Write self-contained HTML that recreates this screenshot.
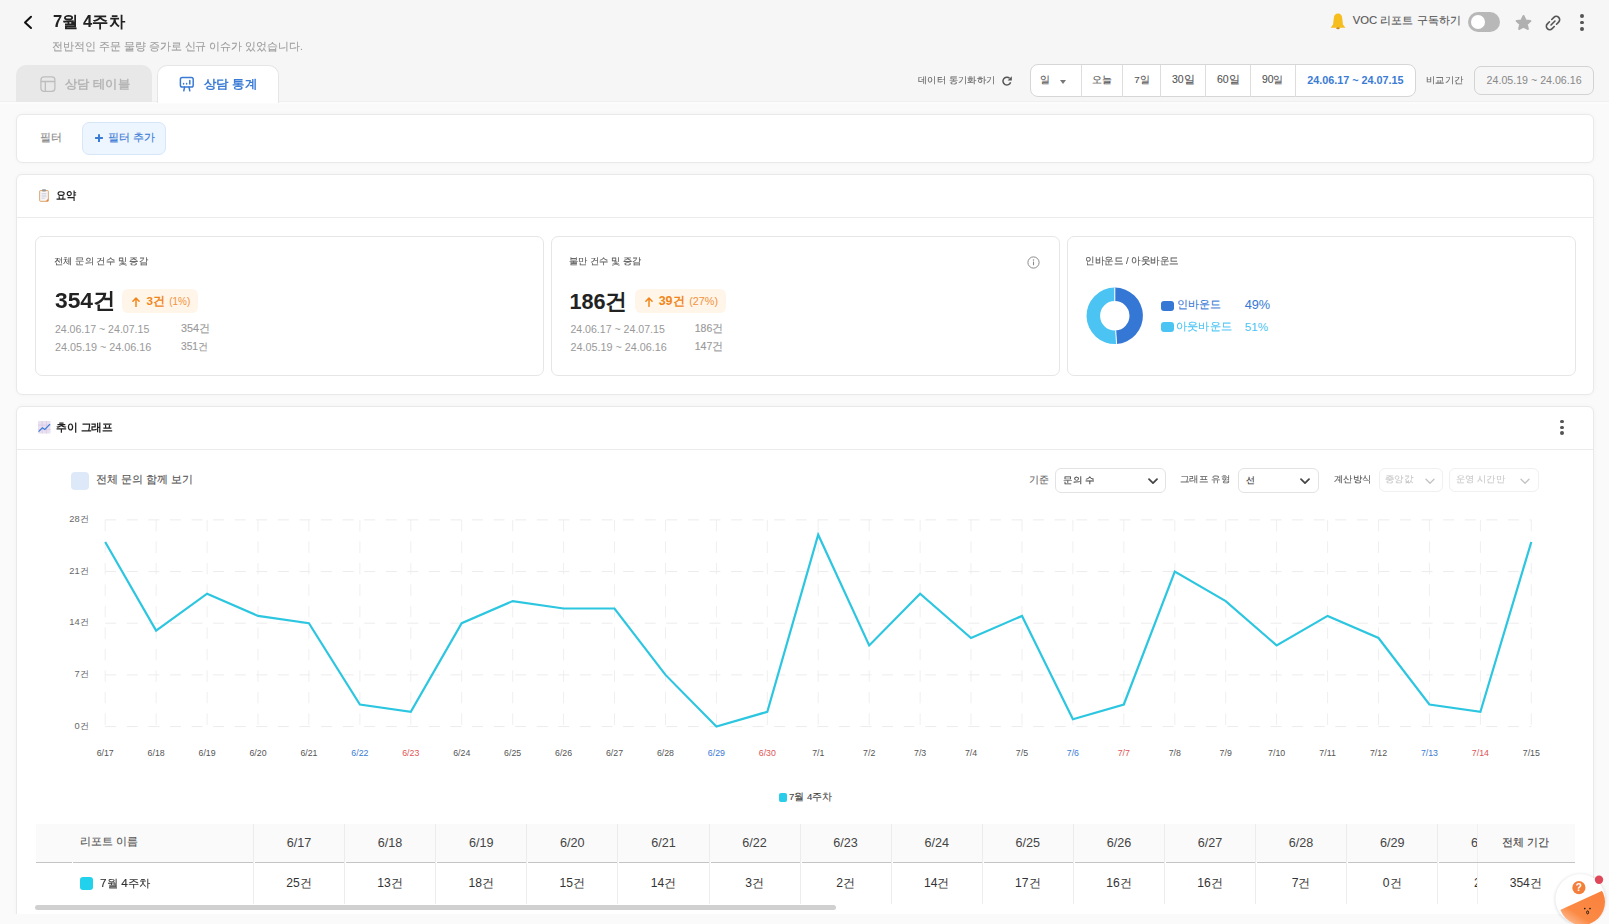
<!DOCTYPE html><html><head><meta charset="utf-8"><style>
*{box-sizing:border-box;margin:0;padding:0}
html,body{width:1609px;height:924px;overflow:hidden}
body{background:#fafafa;font-family:"Liberation Sans",sans-serif;color:#222;position:relative}
.a{position:absolute;white-space:nowrap}
.card{position:absolute;background:#fff;border:1px solid #e9e9e9;border-radius:6px;box-shadow:0 0 5px rgba(0,0,0,0.03)}
.sc{position:absolute;background:#fff;border:1px solid #e6e6e6;border-radius:7px;top:236px;width:509px;height:140px}
.sel{position:absolute;top:468px;height:25px;border:1px solid #e3e3e3;border-radius:6px;background:#fff}
.sel.dis{border-color:#f0f0f0}
</style></head><body>
<div class="a" style="left:0;top:0;width:1609px;height:101px;background:#f6f6f6"></div>
<div class="a" style="left:0;top:101px;width:1609px;height:1px;background:#f0f0f0"></div>
<div class="a" style="left:0;top:102px;width:1609px;height:2px;background:#fcfcfc"></div>
<svg class="a" style="left:0;top:0" width="60" height="40"><path d="M31 16.8 L25 22.4 L31 28" fill="none" stroke="#111" stroke-width="2" stroke-linecap="round" stroke-linejoin="round"/></svg>
<div class="a" style="left:52.8px;top:13.25px;font-size:16.32px;line-height:16.32px;font-weight:700;color:#222;transform:scaleX(1.0169);transform-origin:0 0;">7월 4주차</div>
<div class="a" style="left:52.1px;top:40.6px;font-size:10.79px;line-height:10.79px;font-weight:400;color:#9e9e9e;transform:scaleX(0.9964);transform-origin:0 0;-webkit-text-stroke:0.12px #9e9e9e;">전반적인 주문 물량 증가로 신규 이슈가 있었습니다.</div>
<svg class="a" style="left:1330px;top:13px" width="16" height="17" viewBox="0 0 16 17"><path d="M8 0.6c-2.6 0-3.9 1.9-4.2 4.3L3.1 11.4 0.6 14.8H15.4L12.9 11.4 12.2 4.9C11.9 2.5 10.6 0.6 8 0.6z" fill="#f6bd1e"/><ellipse cx="8" cy="15.2" rx="1.8" ry="1" fill="#c9881a"/></svg>
<div class="a" style="left:1352.8px;top:15.4px;font-size:11.29px;line-height:11.29px;font-weight:400;color:#555;-webkit-text-stroke:0.12px #555;">VOC 리포트 구독하기</div>
<div class="a" style="left:1468px;top:12px;width:32px;height:20px;border-radius:10px;background:#b8b8b8"></div>
<div class="a" style="left:1470.9px;top:14.8px;width:14.3px;height:14.3px;border-radius:50%;background:#fff"></div>
<svg class="a" style="left:1514px;top:13px" width="19" height="19" viewBox="0 0 19 19"><g transform="translate(9.5 9.9) scale(0.86) translate(-9.5 -9.5)"><path d="M9.5 1.6l2.3 5.1 5.5.6-4.1 3.7 1.2 5.4-4.9-2.8-4.9 2.8 1.2-5.4-4.1-3.7 5.5-.6z" fill="#b0b0b0" stroke="#b0b0b0" stroke-width="2.6" stroke-linejoin="round"/></g></svg>
<svg class="a" style="left:1540.7px;top:10.75px" width="24" height="24" viewBox="0 0 24 24"><g transform="rotate(-45 12 12)" fill="none" stroke="#555" stroke-width="1.6" stroke-linecap="round"><path d="M10.4 8.6H7.4a3.4 3.4 0 0 0 0 6.8H10.4M13.6 8.6H16.6a3.4 3.4 0 0 1 0 6.8H13.6M9.2 12H14.8"/></g></svg>
<div class="a" style="left:1579.9px;top:14.4px;width:3.8px;height:3.8px;border-radius:50%;background:#555"></div>
<div class="a" style="left:1579.9px;top:20.5px;width:3.8px;height:3.8px;border-radius:50%;background:#555"></div>
<div class="a" style="left:1579.9px;top:26.900000000000002px;width:3.8px;height:3.8px;border-radius:50%;background:#555"></div>
<div class="a" style="left:16px;top:65px;width:136px;height:37px;background:#e8e8e8;border-radius:10px 10px 0 0"></div>
<svg class="a" style="left:40px;top:76px" width="16" height="16" viewBox="0 0 16 16"><rect x="0.9" y="0.9" width="14" height="14.4" rx="3" fill="none" stroke="#bdbdbd" stroke-width="1.3"/><path d="M0.9 5.5H14.9M5.3 5.5V15.3" stroke="#bdbdbd" stroke-width="1.3"/></svg>
<div class="a" style="left:64.5px;top:78.5px;font-size:11.96px;line-height:11.96px;font-weight:700;color:#b5b5b5;transform:scaleX(1.027);transform-origin:0 0;">상담 테이블</div>
<div class="a" style="left:156.5px;top:65px;width:122px;height:38px;background:#fff;border:1px solid #e6e6e6;border-bottom:none;border-radius:10px 10px 0 0"></div>
<svg class="a" style="left:179px;top:76px" width="16" height="16" viewBox="0 0 16 16"><rect x="1.4" y="1.6" width="12.8" height="9.4" rx="1.8" fill="none" stroke="#3a7bd5" stroke-width="1.5"/><path d="M4.6 7.4v0.6M7.6 7.4v0.6M10.8 4.6v3.4M5.6 11l-0.8 3.8M10 11l0.8 3.8" stroke="#3a7bd5" stroke-width="1.5" stroke-linecap="round"/></svg>
<div class="a" style="left:204.2px;top:77.5px;font-size:11.99px;line-height:11.99px;font-weight:700;color:#3a7bd5;transform:scaleX(1.036);transform-origin:0 0;">상담 통계</div>
<div class="a" style="left:917.5px;top:75.65px;font-size:9.13px;line-height:9.13px;font-weight:400;color:#666;transform:scaleX(1.0378);transform-origin:0 0;-webkit-text-stroke:0.12px #666;">데이터 동기화하기</div>
<svg class="a" style="left:1001px;top:75px" width="12" height="12" viewBox="0 0 12 12"><path d="M9.6 7.2A3.9 3.9 0 1 1 8.6 3.3" fill="none" stroke="#555" stroke-width="1.5"/><path d="M10.8 1.2v4.2H6.6z" fill="#555"/></svg>
<div class="a" style="left:1029.5px;top:64.4px;width:386px;height:33px;border:1px solid #d6d6d6;border-radius:8px;background:#fff"></div>
<div class="a" style="left:1080.9px;top:65px;width:1px;height:32px;background:#dddddd"></div>
<div class="a" style="left:1121.8px;top:65px;width:1px;height:32px;background:#dddddd"></div>
<div class="a" style="left:1159.9px;top:65px;width:1px;height:32px;background:#dddddd"></div>
<div class="a" style="left:1205.0px;top:65px;width:1px;height:32px;background:#dddddd"></div>
<div class="a" style="left:1250.1px;top:65px;width:1px;height:32px;background:#dddddd"></div>
<div class="a" style="left:1294.8px;top:65px;width:1px;height:32px;background:#dddddd"></div>
<div class="a" style="left:1040.2px;top:75.1px;font-size:10.06px;line-height:10.06px;font-weight:400;color:#555;-webkit-text-stroke:0.12px #555;">일</div>
<div class="a" style="left:1092.1px;top:74.8px;font-size:9.51px;line-height:9.51px;font-weight:400;color:#555;-webkit-text-stroke:0.12px #555;">오늘</div>
<div class="a" style="left:1134.25px;top:75.3px;font-size:9.84px;line-height:9.84px;font-weight:400;color:#555;-webkit-text-stroke:0.12px #555;">7일</div>
<div class="a" style="left:1172.0px;top:74.3px;font-size:10.51px;line-height:10.51px;font-weight:400;color:#555;-webkit-text-stroke:0.12px #555;">30일</div>
<div class="a" style="left:1217.0px;top:74.3px;font-size:10.55px;line-height:10.55px;font-weight:400;color:#555;-webkit-text-stroke:0.12px #555;">60일</div>
<div class="a" style="left:1261.9px;top:75.3px;font-size:10.4px;line-height:10.4px;font-weight:400;color:#555;-webkit-text-stroke:0.12px #555;">90일</div>
<svg class="a" style="left:1060px;top:79.7px" width="6" height="4" viewBox="0 0 6 4"><path d="M0 0h6L3 4z" fill="#777"/></svg>
<div class="a" style="left:1307.2px;top:75.1px;font-size:10.81px;line-height:10.81px;font-weight:700;color:#3a7bd5;">24.06.17 ~ 24.07.15</div>
<div class="a" style="left:1425.76px;top:76.0px;font-size:9.03px;line-height:9.03px;font-weight:400;color:#666;transform:scaleX(1.04);transform-origin:0 0;-webkit-text-stroke:0.12px #666;">비교기간</div>
<div class="a" style="left:1474.4px;top:66px;width:119.2px;height:29.4px;border:1px solid #d3d3d3;border-radius:7px"></div>
<div class="a" style="left:1486.6px;top:74.85px;font-size:10.65px;line-height:10.65px;font-weight:400;color:#888;">24.05.19 ~ 24.06.16</div>
<div class="card" style="left:16px;top:114px;width:1578px;height:49px"></div>
<div class="a" style="left:39.9px;top:131.6px;font-size:10.84px;line-height:10.84px;font-weight:400;color:#888;-webkit-text-stroke:0.12px #888;">필터</div>
<div class="a" style="left:82.3px;top:122px;width:84.1px;height:32.6px;background:#edf5fe;border:1px solid #d8e7f8;border-radius:7px"></div>
<svg class="a" style="left:94px;top:133px" width="10" height="10" viewBox="0 0 10 10"><path d="M5 1.2v7.7M1.1 5h7.8" stroke="#3a7bd5" stroke-width="2"/></svg>
<div class="a" style="left:108.1px;top:132.05px;font-size:10.89px;line-height:10.89px;font-weight:500;color:#3a7bd5;-webkit-text-stroke:0.12px #3a7bd5;">필터 추가</div>
<div class="card" style="left:16px;top:174px;width:1578px;height:221px"></div>
<div class="a" style="left:17px;top:217px;width:1576px;height:1px;background:#ebebeb"></div>
<svg class="a" style="left:39px;top:189px" width="10" height="13" viewBox="0 0 10 13"><rect x="0.7" y="1.6" width="8.6" height="10.7" rx="0.6" fill="#fdf6ee" stroke="#d39a5c" stroke-width="0.9"/><rect x="1.7" y="2.8" width="6.6" height="8.4" fill="#f4f4fa"/><path d="M2.6 4.6h4.8M2.6 6.2h4.8M2.6 7.8h4.8M2.6 9.4h3" stroke="#c9c9d6" stroke-width="0.7"/><path d="M6.8 12.3L9.3 9.6V12.3z" fill="#e8873a"/><rect x="3" y="0.3" width="4" height="2.2" rx="0.8" fill="#9a9a9a"/></svg>
<div class="a" style="left:55.7px;top:190.1px;font-size:10.98px;line-height:10.98px;font-weight:700;color:#222;transform:scaleX(0.9261);transform-origin:0 0;">요약</div>
<div class="sc" style="left:35px"></div>
<div class="sc" style="left:551px"></div>
<div class="sc" style="left:1067px"></div>
<div class="a" style="left:122.3px;top:288.6px;width:76px;height:24.6px;background:#fff5e9;border-radius:6px"></div>
<div class="a" style="left:635.3px;top:288.6px;width:91px;height:24.6px;background:#fff5e9;border-radius:6px"></div>
<svg class="a" style="left:132.4px;top:296.5px" width="8" height="10" viewBox="0 0 8 10"><path d="M4 9.4V1.2M0.9 4.2L4 1.1 7.1 4.2" fill="none" stroke="#f0861a" stroke-width="1.5" stroke-linecap="round" stroke-linejoin="round"/></svg>
<svg class="a" style="left:645.4px;top:296.5px" width="8" height="10" viewBox="0 0 8 10"><path d="M4 9.4V1.2M0.9 4.2L4 1.1 7.1 4.2" fill="none" stroke="#f0861a" stroke-width="1.5" stroke-linecap="round" stroke-linejoin="round"/></svg>
<div class="a" style="left:53.87px;top:257.05px;font-size:8.97px;line-height:8.97px;font-weight:400;color:#555;transform:scaleX(1.0344);transform-origin:0 0;-webkit-text-stroke:0.12px #555;">전체 문의 건수 및 증감</div>
<div class="a" style="left:55.2px;top:290.2px;font-size:22.33px;line-height:22.33px;font-weight:700;color:#222;transform:scaleX(1.0211);transform-origin:0 0;">354건</div>
<div class="a" style="left:146.5px;top:295.0px;font-size:11.68px;line-height:11.68px;font-weight:700;color:#f0861a;">3건</div>
<div class="a" style="left:54.9px;top:324.25px;font-size:10.58px;line-height:10.58px;font-weight:400;color:#999;">24.06.17 ~ 24.07.15</div>
<div class="a" style="left:181.0px;top:323.25px;font-size:10.76px;line-height:10.76px;font-weight:400;color:#999;-webkit-text-stroke:0.12px #999;">354건</div>
<div class="a" style="left:54.9px;top:342.25px;font-size:10.81px;line-height:10.81px;font-weight:400;color:#999;">24.05.19 ~ 24.06.16</div>
<div class="a" style="left:181.0px;top:342.25px;font-size:10.21px;line-height:10.21px;font-weight:400;color:#999;-webkit-text-stroke:0.12px #999;">351건</div>
<div class="a" style="left:569.37px;top:257.05px;font-size:9.0px;line-height:9.0px;font-weight:400;color:#555;transform:scaleX(1.03);transform-origin:0 0;-webkit-text-stroke:0.12px #555;">불만 건수 및 증감</div>
<div class="a" style="left:569.4px;top:290.5px;font-size:21.64px;line-height:21.64px;font-weight:700;color:#222;">186건</div>
<div class="a" style="left:658.7px;top:295.0px;font-size:12.46px;line-height:12.46px;font-weight:700;color:#f0861a;">39건</div>
<div class="a" style="left:570.4px;top:324.25px;font-size:10.58px;line-height:10.58px;font-weight:400;color:#999;">24.06.17 ~ 24.07.15</div>
<div class="a" style="left:694.7px;top:323.25px;font-size:10.52px;line-height:10.52px;font-weight:400;color:#999;-webkit-text-stroke:0.12px #999;">186건</div>
<div class="a" style="left:570.4px;top:342.25px;font-size:10.81px;line-height:10.81px;font-weight:400;color:#999;">24.05.19 ~ 24.06.16</div>
<div class="a" style="left:694.7px;top:341.25px;font-size:10.52px;line-height:10.52px;font-weight:400;color:#999;-webkit-text-stroke:0.12px #999;">147건</div>
<div class="a" style="left:1085.14px;top:256.32px;font-size:9.68px;line-height:9.68px;font-weight:400;color:#555;transform:scaleX(0.9583);transform-origin:0 0;-webkit-text-stroke:0.12px #555;">인바운드 / 아웃바운드</div>
<div class="a" style="left:1177.1px;top:298.7px;font-size:11.35px;line-height:11.35px;font-weight:400;color:#3577d4;-webkit-text-stroke:0.12px #3577d4;">인바운드</div>
<div class="a" style="left:1244.7px;top:299.45px;font-size:12.75px;line-height:12.75px;font-weight:400;color:#3577d4;">49%</div>
<div class="a" style="left:1176.48px;top:320.6px;font-size:11.49px;line-height:11.49px;font-weight:400;color:#4bc4f4;transform:scaleX(1.0226);transform-origin:0 0;-webkit-text-stroke:0.12px #4bc4f4;">아웃바운드</div>
<div class="a" style="left:1244.7px;top:320.6px;font-size:11.71px;line-height:11.71px;font-weight:400;color:#4bc4f4;">51%</div>
<div class="a" style="left:169.2px;top:296.5px;font-size:9.99px;line-height:9.99px;font-weight:400;color:#f2923a;">(1%)</div>
<div class="a" style="left:689.2px;top:295.5px;font-size:10.8px;line-height:10.8px;font-weight:400;color:#f2923a;">(27%)</div>
<svg class="a" style="left:1026.5px;top:255.5px" width="13" height="13" viewBox="0 0 13 13"><circle cx="6.5" cy="6.5" r="5.6" fill="none" stroke="#8a8a8a" stroke-width="1"/><path d="M6.5 5.6v3.6" stroke="#8a8a8a" stroke-width="1.1"/><circle cx="6.5" cy="3.9" r="0.75" fill="#8a8a8a"/></svg>
<svg class="a" style="left:0;top:0" width="1609" height="400"><path d="M1114.80 287.60A28.2 28.2 0 0 1 1116.57 343.94L1115.72 330.47A14.7 14.7 0 0 0 1114.80 301.10Z" fill="#3577d4"/><path d="M1116.57 343.94A28.2 28.2 0 1 1 1114.80 287.60L1114.80 301.10A14.7 14.7 0 1 0 1115.72 330.47Z" fill="#4bc4f4"/><path d="M1114.80 287.60L1114.80 301.10" stroke="#fff" stroke-width="1"/><path d="M1116.57 343.94L1115.72 330.47" stroke="#fff" stroke-width="1"/></svg>
<div class="a" style="left:1161.2px;top:300.5px;width:12.4px;height:10px;border-radius:3px;background:#3577d4"></div>
<div class="a" style="left:1161.2px;top:321.8px;width:12.4px;height:10px;border-radius:3px;background:#4bc4f4"></div>
<div class="a" style="left:16px;top:406px;width:1578px;height:540px;background:#fff;border:1px solid #e9e9e9;border-radius:6px;box-shadow:0 0 5px rgba(0,0,0,0.03)"></div>
<div class="a" style="left:17px;top:449px;width:1576px;height:1px;background:#ebebeb"></div>
<svg class="a" style="left:37.5px;top:421px" width="13" height="13" viewBox="0 0 13 13"><rect x="0" y="0" width="12.5" height="12.5" rx="1" fill="#e9e0f0"/><path d="M0 4.2h12.5M0 8.4h12.5M4.2 0v12.5M8.4 0v12.5" stroke="#d3c2e2" stroke-width="0.6"/><path d="M0.6 10.6L4.4 6.8 6.8 8.4 12 3.2" fill="none" stroke="#3a7bd5" stroke-width="1.2"/></svg>
<div class="a" style="left:55.7px;top:421.75px;font-size:11.45px;line-height:11.45px;font-weight:700;color:#222;transform:scaleX(0.9793);transform-origin:0 0;">추이 그래프</div>
<div class="a" style="left:1560.3px;top:419.70000000000005px;width:3.8px;height:3.8px;border-radius:50%;background:#555"></div>
<div class="a" style="left:1560.3px;top:425.5px;width:3.8px;height:3.8px;border-radius:50%;background:#555"></div>
<div class="a" style="left:1560.3px;top:431.3px;width:3.8px;height:3.8px;border-radius:50%;background:#555"></div>
<div class="a" style="left:71.4px;top:472px;width:17.6px;height:17.8px;border-radius:4px;background:#dde9f8"></div>
<div class="a" style="left:95.8px;top:474.45px;font-size:11.11px;line-height:11.11px;font-weight:400;color:#555;-webkit-text-stroke:0.12px #555;">전체 문의 함께 보기</div>
<div class="sel" style="left:1055.1px;width:111.3px;height:24.4px;top:468.2px"></div>
<div class="sel" style="left:1238.3px;width:80.4px;height:24.4px;top:468.2px"></div>
<div class="sel dis" style="left:1378.7px;width:64.3px;height:24.2px;top:468.2px"></div>
<div class="sel dis" style="left:1449.3px;width:89.5px;height:24.2px;top:468.2px"></div>
<div class="a" style="left:1029.0px;top:475.25px;font-size:10.06px;line-height:10.06px;font-weight:400;color:#666;-webkit-text-stroke:0.12px #666;">기준</div>
<div class="a" style="left:1062.73px;top:475.25px;font-size:9.46px;line-height:9.46px;font-weight:400;color:#333;transform:scaleX(1.0679);transform-origin:0 0;-webkit-text-stroke:0.12px #333;">문의 수</div>
<div class="a" style="left:1180.45px;top:474.45px;font-size:9.45px;line-height:9.45px;font-weight:400;color:#666;transform:scaleX(1.0543);transform-origin:0 0;-webkit-text-stroke:0.12px #666;">그래프 유형</div>
<div class="a" style="left:1246.2px;top:475.95px;font-size:9.05px;line-height:9.05px;font-weight:400;color:#333;-webkit-text-stroke:0.12px #333;">선</div>
<div class="a" style="left:1333.6px;top:475.45px;font-size:9.25px;line-height:9.25px;font-weight:400;color:#555;transform:scaleX(1.04);transform-origin:0 0;-webkit-text-stroke:0.12px #555;">계산방식</div>
<div class="a" style="left:1384.75px;top:475.45px;font-size:9.27px;line-height:9.27px;font-weight:400;color:#c8c8c8;transform:scaleX(1.05);transform-origin:0 0;-webkit-text-stroke:0.12px #c8c8c8;">중앙값</div>
<div class="a" style="left:1456.37px;top:475.45px;font-size:9.01px;line-height:9.01px;font-weight:400;color:#c8c8c8;transform:scaleX(1.0319);transform-origin:0 0;-webkit-text-stroke:0.12px #c8c8c8;">운영 시간만</div>
<svg class="a" style="left:1148px;top:477.5px" width="10" height="7" viewBox="0 0 10 7"><path d="M1 1.2l4 4 4-4" fill="none" stroke="#444" stroke-width="1.7" stroke-linecap="round" stroke-linejoin="round"/></svg>
<svg class="a" style="left:1299.6px;top:477.5px" width="10" height="7" viewBox="0 0 10 7"><path d="M1 1.2l4 4 4-4" fill="none" stroke="#444" stroke-width="1.7" stroke-linecap="round" stroke-linejoin="round"/></svg>
<svg class="a" style="left:1425px;top:477.5px" width="10" height="7" viewBox="0 0 10 7"><path d="M1 1.2l4 4 4-4" fill="none" stroke="#c4c4c4" stroke-width="1.4" stroke-linecap="round" stroke-linejoin="round"/></svg>
<svg class="a" style="left:1520px;top:477.5px" width="10" height="7" viewBox="0 0 10 7"><path d="M1 1.2l4 4 4-4" fill="none" stroke="#c4c4c4" stroke-width="1.4" stroke-linecap="round" stroke-linejoin="round"/></svg>
<svg class="a" style="left:0;top:0" width="1609" height="924"><line x1="105.2" y1="519.9" x2="1531.3" y2="519.9" stroke="#ececec" stroke-width="1" stroke-dasharray="11 10.58"/><line x1="105.2" y1="571.6" x2="1531.3" y2="571.6" stroke="#ececec" stroke-width="1" stroke-dasharray="11 10.58"/><line x1="105.2" y1="623.2" x2="1531.3" y2="623.2" stroke="#ececec" stroke-width="1" stroke-dasharray="11 10.58"/><line x1="105.2" y1="674.9" x2="1531.3" y2="674.9" stroke="#ececec" stroke-width="1" stroke-dasharray="11 10.58"/><line x1="105.2" y1="726.6" x2="1531.3" y2="726.6" stroke="#ececec" stroke-width="1" stroke-dasharray="11 10.58"/><line x1="105.2" y1="519.9" x2="105.2" y2="726.6" stroke="#efefef" stroke-width="1" stroke-dasharray="11.5 10"/><line x1="156.1" y1="519.9" x2="156.1" y2="726.6" stroke="#efefef" stroke-width="1" stroke-dasharray="11.5 10"/><line x1="207.1" y1="519.9" x2="207.1" y2="726.6" stroke="#efefef" stroke-width="1" stroke-dasharray="11.5 10"/><line x1="258.0" y1="519.9" x2="258.0" y2="726.6" stroke="#efefef" stroke-width="1" stroke-dasharray="11.5 10"/><line x1="308.9" y1="519.9" x2="308.9" y2="726.6" stroke="#efefef" stroke-width="1" stroke-dasharray="11.5 10"/><line x1="359.9" y1="519.9" x2="359.9" y2="726.6" stroke="#efefef" stroke-width="1" stroke-dasharray="11.5 10"/><line x1="410.8" y1="519.9" x2="410.8" y2="726.6" stroke="#efefef" stroke-width="1" stroke-dasharray="11.5 10"/><line x1="461.7" y1="519.9" x2="461.7" y2="726.6" stroke="#efefef" stroke-width="1" stroke-dasharray="11.5 10"/><line x1="512.7" y1="519.9" x2="512.7" y2="726.6" stroke="#efefef" stroke-width="1" stroke-dasharray="11.5 10"/><line x1="563.6" y1="519.9" x2="563.6" y2="726.6" stroke="#efefef" stroke-width="1" stroke-dasharray="11.5 10"/><line x1="614.5" y1="519.9" x2="614.5" y2="726.6" stroke="#efefef" stroke-width="1" stroke-dasharray="11.5 10"/><line x1="665.5" y1="519.9" x2="665.5" y2="726.6" stroke="#efefef" stroke-width="1" stroke-dasharray="11.5 10"/><line x1="716.4" y1="519.9" x2="716.4" y2="726.6" stroke="#efefef" stroke-width="1" stroke-dasharray="11.5 10"/><line x1="767.3" y1="519.9" x2="767.3" y2="726.6" stroke="#efefef" stroke-width="1" stroke-dasharray="11.5 10"/><line x1="818.2" y1="519.9" x2="818.2" y2="726.6" stroke="#efefef" stroke-width="1" stroke-dasharray="11.5 10"/><line x1="869.2" y1="519.9" x2="869.2" y2="726.6" stroke="#efefef" stroke-width="1" stroke-dasharray="11.5 10"/><line x1="920.1" y1="519.9" x2="920.1" y2="726.6" stroke="#efefef" stroke-width="1" stroke-dasharray="11.5 10"/><line x1="971.0" y1="519.9" x2="971.0" y2="726.6" stroke="#efefef" stroke-width="1" stroke-dasharray="11.5 10"/><line x1="1022.0" y1="519.9" x2="1022.0" y2="726.6" stroke="#efefef" stroke-width="1" stroke-dasharray="11.5 10"/><line x1="1072.9" y1="519.9" x2="1072.9" y2="726.6" stroke="#efefef" stroke-width="1" stroke-dasharray="11.5 10"/><line x1="1123.8" y1="519.9" x2="1123.8" y2="726.6" stroke="#efefef" stroke-width="1" stroke-dasharray="11.5 10"/><line x1="1174.8" y1="519.9" x2="1174.8" y2="726.6" stroke="#efefef" stroke-width="1" stroke-dasharray="11.5 10"/><line x1="1225.7" y1="519.9" x2="1225.7" y2="726.6" stroke="#efefef" stroke-width="1" stroke-dasharray="11.5 10"/><line x1="1276.6" y1="519.9" x2="1276.6" y2="726.6" stroke="#efefef" stroke-width="1" stroke-dasharray="11.5 10"/><line x1="1327.6" y1="519.9" x2="1327.6" y2="726.6" stroke="#efefef" stroke-width="1" stroke-dasharray="11.5 10"/><line x1="1378.5" y1="519.9" x2="1378.5" y2="726.6" stroke="#efefef" stroke-width="1" stroke-dasharray="11.5 10"/><line x1="1429.4" y1="519.9" x2="1429.4" y2="726.6" stroke="#efefef" stroke-width="1" stroke-dasharray="11.5 10"/><line x1="1480.4" y1="519.9" x2="1480.4" y2="726.6" stroke="#efefef" stroke-width="1" stroke-dasharray="11.5 10"/><line x1="1531.3" y1="519.9" x2="1531.3" y2="726.6" stroke="#efefef" stroke-width="1" stroke-dasharray="11.5 10"/><polyline points="105.2,542.0 156.1,630.6 207.1,593.7 258.0,615.9 308.9,623.2 359.9,704.5 410.8,711.8 461.7,623.2 512.7,601.1 563.6,608.5 614.5,608.5 665.5,674.9 716.4,726.6 767.3,711.8 818.2,534.7 869.2,645.4 920.1,593.7 971.0,638.0 1022.0,615.9 1072.9,719.2 1123.8,704.5 1174.8,571.6 1225.7,601.1 1276.6,645.4 1327.6,615.9 1378.5,638.0 1429.4,704.5 1480.4,711.8 1531.3,542.0" fill="none" stroke="#2cc6e0" stroke-width="2.2" stroke-linejoin="miter"/></svg>
<div class="a" style="left:20px;width:68.6px;text-align:right;top:515.05px;font-size:9.3px;line-height:9.3px;color:#666">28건</div>
<div class="a" style="left:20px;width:68.6px;text-align:right;top:566.73px;font-size:9.3px;line-height:9.3px;color:#666">21건</div>
<div class="a" style="left:20px;width:68.6px;text-align:right;top:618.40px;font-size:9.3px;line-height:9.3px;color:#666">14건</div>
<div class="a" style="left:20px;width:68.6px;text-align:right;top:670.07px;font-size:9.3px;line-height:9.3px;color:#666">7건</div>
<div class="a" style="left:20px;width:68.6px;text-align:right;top:721.75px;font-size:9.3px;line-height:9.3px;color:#666">0건</div>
<div class="a" style="left:65.20px;width:80px;text-align:center;top:749.15px;font-size:8.79px;line-height:8.79px;color:#555">6/17</div>
<div class="a" style="left:116.13px;width:80px;text-align:center;top:749.15px;font-size:8.79px;line-height:8.79px;color:#555">6/18</div>
<div class="a" style="left:167.06px;width:80px;text-align:center;top:749.15px;font-size:8.79px;line-height:8.79px;color:#555">6/19</div>
<div class="a" style="left:218.00px;width:80px;text-align:center;top:749.15px;font-size:8.79px;line-height:8.79px;color:#555">6/20</div>
<div class="a" style="left:268.93px;width:80px;text-align:center;top:749.15px;font-size:8.79px;line-height:8.79px;color:#555">6/21</div>
<div class="a" style="left:319.86px;width:80px;text-align:center;top:749.15px;font-size:8.79px;line-height:8.79px;color:#3a7bd5">6/22</div>
<div class="a" style="left:370.79px;width:80px;text-align:center;top:749.15px;font-size:8.79px;line-height:8.79px;color:#e05555">6/23</div>
<div class="a" style="left:421.72px;width:80px;text-align:center;top:749.15px;font-size:8.79px;line-height:8.79px;color:#555">6/24</div>
<div class="a" style="left:472.66px;width:80px;text-align:center;top:749.15px;font-size:8.79px;line-height:8.79px;color:#555">6/25</div>
<div class="a" style="left:523.59px;width:80px;text-align:center;top:749.15px;font-size:8.79px;line-height:8.79px;color:#555">6/26</div>
<div class="a" style="left:574.52px;width:80px;text-align:center;top:749.15px;font-size:8.79px;line-height:8.79px;color:#555">6/27</div>
<div class="a" style="left:625.45px;width:80px;text-align:center;top:749.15px;font-size:8.79px;line-height:8.79px;color:#555">6/28</div>
<div class="a" style="left:676.39px;width:80px;text-align:center;top:749.15px;font-size:8.79px;line-height:8.79px;color:#3a7bd5">6/29</div>
<div class="a" style="left:727.32px;width:80px;text-align:center;top:749.15px;font-size:8.79px;line-height:8.79px;color:#e05555">6/30</div>
<div class="a" style="left:778.25px;width:80px;text-align:center;top:749.15px;font-size:8.79px;line-height:8.79px;color:#555">7/1</div>
<div class="a" style="left:829.18px;width:80px;text-align:center;top:749.15px;font-size:8.79px;line-height:8.79px;color:#555">7/2</div>
<div class="a" style="left:880.11px;width:80px;text-align:center;top:749.15px;font-size:8.79px;line-height:8.79px;color:#555">7/3</div>
<div class="a" style="left:931.05px;width:80px;text-align:center;top:749.15px;font-size:8.79px;line-height:8.79px;color:#555">7/4</div>
<div class="a" style="left:981.98px;width:80px;text-align:center;top:749.15px;font-size:8.79px;line-height:8.79px;color:#555">7/5</div>
<div class="a" style="left:1032.91px;width:80px;text-align:center;top:749.15px;font-size:8.79px;line-height:8.79px;color:#3a7bd5">7/6</div>
<div class="a" style="left:1083.84px;width:80px;text-align:center;top:749.15px;font-size:8.79px;line-height:8.79px;color:#e05555">7/7</div>
<div class="a" style="left:1134.78px;width:80px;text-align:center;top:749.15px;font-size:8.79px;line-height:8.79px;color:#555">7/8</div>
<div class="a" style="left:1185.71px;width:80px;text-align:center;top:749.15px;font-size:8.79px;line-height:8.79px;color:#555">7/9</div>
<div class="a" style="left:1236.64px;width:80px;text-align:center;top:749.15px;font-size:8.79px;line-height:8.79px;color:#555">7/10</div>
<div class="a" style="left:1287.57px;width:80px;text-align:center;top:749.15px;font-size:8.79px;line-height:8.79px;color:#555">7/11</div>
<div class="a" style="left:1338.50px;width:80px;text-align:center;top:749.15px;font-size:8.79px;line-height:8.79px;color:#555">7/12</div>
<div class="a" style="left:1389.44px;width:80px;text-align:center;top:749.15px;font-size:8.79px;line-height:8.79px;color:#3a7bd5">7/13</div>
<div class="a" style="left:1440.37px;width:80px;text-align:center;top:749.15px;font-size:8.79px;line-height:8.79px;color:#e05555">7/14</div>
<div class="a" style="left:1491.30px;width:80px;text-align:center;top:749.15px;font-size:8.79px;line-height:8.79px;color:#555">7/15</div>
<div class="a" style="left:778.5px;top:793px;width:8.5px;height:9px;border-radius:2px;background:#29cde9"></div>
<div class="a" style="left:789.0px;top:791.6px;font-size:9.63px;line-height:9.63px;font-weight:400;color:#444;-webkit-text-stroke:0.12px #444;">7월 4주차</div>
<div class="a" style="left:36px;top:824px;width:1539px;height:38px;background:#fafafa"></div>
<div class="a" style="left:36px;top:861.6px;width:1539px;height:1.6px;background:#c4c4c4"></div>
<div class="a" style="left:79.7px;top:836.4px;font-size:11.22px;line-height:11.22px;font-weight:400;color:#555;-webkit-text-stroke:0.12px #555;">리포트 이름</div>
<div class="a" style="left:80.2px;top:877.4px;width:12.7px;height:12.2px;border-radius:3px;background:#22d1ec"></div>
<div class="a" style="left:100.3px;top:877.7px;font-size:11.46px;line-height:11.46px;font-weight:400;color:#333;transform:scaleX(1.0286);transform-origin:0 0;-webkit-text-stroke:0.12px #333;">7월 4주차</div>
<div class="a" style="left:253.0px;top:824px;width:1px;height:80px;background:#ececec"></div>
<div class="a" style="left:254.0px;top:861.6px;width:1px;height:1.6px;background:#fff"></div>
<div class="a" style="left:254.0px;width:90px;text-align:center;top:837.4px;font-size:12.6px;line-height:12.6px;color:#444">6/17</div>
<div class="a" style="left:254.0px;width:90px;text-align:center;top:877.15px;font-size:12.11px;line-height:12.11px;color:#333">25건</div>
<div class="a" style="left:344.1px;top:824px;width:1px;height:80px;background:#ececec"></div>
<div class="a" style="left:345.1px;top:861.6px;width:1px;height:1.6px;background:#fff"></div>
<div class="a" style="left:345.1px;width:90px;text-align:center;top:837.4px;font-size:12.6px;line-height:12.6px;color:#444">6/18</div>
<div class="a" style="left:345.1px;width:90px;text-align:center;top:877.15px;font-size:12.11px;line-height:12.11px;color:#333">13건</div>
<div class="a" style="left:435.2px;top:824px;width:1px;height:80px;background:#ececec"></div>
<div class="a" style="left:436.2px;top:861.6px;width:1px;height:1.6px;background:#fff"></div>
<div class="a" style="left:436.2px;width:90px;text-align:center;top:837.4px;font-size:12.6px;line-height:12.6px;color:#444">6/19</div>
<div class="a" style="left:436.2px;width:90px;text-align:center;top:877.15px;font-size:12.11px;line-height:12.11px;color:#333">18건</div>
<div class="a" style="left:526.3px;top:824px;width:1px;height:80px;background:#ececec"></div>
<div class="a" style="left:527.3px;top:861.6px;width:1px;height:1.6px;background:#fff"></div>
<div class="a" style="left:527.3px;width:90px;text-align:center;top:837.4px;font-size:12.6px;line-height:12.6px;color:#444">6/20</div>
<div class="a" style="left:527.3px;width:90px;text-align:center;top:877.15px;font-size:12.11px;line-height:12.11px;color:#333">15건</div>
<div class="a" style="left:617.4px;top:824px;width:1px;height:80px;background:#ececec"></div>
<div class="a" style="left:618.4px;top:861.6px;width:1px;height:1.6px;background:#fff"></div>
<div class="a" style="left:618.4px;width:90px;text-align:center;top:837.4px;font-size:12.6px;line-height:12.6px;color:#444">6/21</div>
<div class="a" style="left:618.4px;width:90px;text-align:center;top:877.15px;font-size:12.11px;line-height:12.11px;color:#333">14건</div>
<div class="a" style="left:708.5px;top:824px;width:1px;height:80px;background:#ececec"></div>
<div class="a" style="left:709.5px;top:861.6px;width:1px;height:1.6px;background:#fff"></div>
<div class="a" style="left:709.5px;width:90px;text-align:center;top:837.4px;font-size:12.6px;line-height:12.6px;color:#444">6/22</div>
<div class="a" style="left:709.5px;width:90px;text-align:center;top:877.15px;font-size:12.11px;line-height:12.11px;color:#333">3건</div>
<div class="a" style="left:799.5999999999999px;top:824px;width:1px;height:80px;background:#ececec"></div>
<div class="a" style="left:800.5999999999999px;top:861.6px;width:1px;height:1.6px;background:#fff"></div>
<div class="a" style="left:800.5999999999999px;width:90px;text-align:center;top:837.4px;font-size:12.6px;line-height:12.6px;color:#444">6/23</div>
<div class="a" style="left:800.5999999999999px;width:90px;text-align:center;top:877.15px;font-size:12.11px;line-height:12.11px;color:#333">2건</div>
<div class="a" style="left:890.6999999999999px;top:824px;width:1px;height:80px;background:#ececec"></div>
<div class="a" style="left:891.6999999999999px;top:861.6px;width:1px;height:1.6px;background:#fff"></div>
<div class="a" style="left:891.6999999999999px;width:90px;text-align:center;top:837.4px;font-size:12.6px;line-height:12.6px;color:#444">6/24</div>
<div class="a" style="left:891.6999999999999px;width:90px;text-align:center;top:877.15px;font-size:12.11px;line-height:12.11px;color:#333">14건</div>
<div class="a" style="left:981.8px;top:824px;width:1px;height:80px;background:#ececec"></div>
<div class="a" style="left:982.8px;top:861.6px;width:1px;height:1.6px;background:#fff"></div>
<div class="a" style="left:982.8px;width:90px;text-align:center;top:837.4px;font-size:12.6px;line-height:12.6px;color:#444">6/25</div>
<div class="a" style="left:982.8px;width:90px;text-align:center;top:877.15px;font-size:12.11px;line-height:12.11px;color:#333">17건</div>
<div class="a" style="left:1072.9px;top:824px;width:1px;height:80px;background:#ececec"></div>
<div class="a" style="left:1073.9px;top:861.6px;width:1px;height:1.6px;background:#fff"></div>
<div class="a" style="left:1073.9px;width:90px;text-align:center;top:837.4px;font-size:12.6px;line-height:12.6px;color:#444">6/26</div>
<div class="a" style="left:1073.9px;width:90px;text-align:center;top:877.15px;font-size:12.11px;line-height:12.11px;color:#333">16건</div>
<div class="a" style="left:1164.0px;top:824px;width:1px;height:80px;background:#ececec"></div>
<div class="a" style="left:1165.0px;top:861.6px;width:1px;height:1.6px;background:#fff"></div>
<div class="a" style="left:1165.0px;width:90px;text-align:center;top:837.4px;font-size:12.6px;line-height:12.6px;color:#444">6/27</div>
<div class="a" style="left:1165.0px;width:90px;text-align:center;top:877.15px;font-size:12.11px;line-height:12.11px;color:#333">16건</div>
<div class="a" style="left:1255.1px;top:824px;width:1px;height:80px;background:#ececec"></div>
<div class="a" style="left:1256.1px;top:861.6px;width:1px;height:1.6px;background:#fff"></div>
<div class="a" style="left:1256.1px;width:90px;text-align:center;top:837.4px;font-size:12.6px;line-height:12.6px;color:#444">6/28</div>
<div class="a" style="left:1256.1px;width:90px;text-align:center;top:877.15px;font-size:12.11px;line-height:12.11px;color:#333">7건</div>
<div class="a" style="left:1346.1999999999998px;top:824px;width:1px;height:80px;background:#ececec"></div>
<div class="a" style="left:1347.1999999999998px;top:861.6px;width:1px;height:1.6px;background:#fff"></div>
<div class="a" style="left:1347.1999999999998px;width:90px;text-align:center;top:837.4px;font-size:12.6px;line-height:12.6px;color:#444">6/29</div>
<div class="a" style="left:1347.1999999999998px;width:90px;text-align:center;top:877.15px;font-size:12.11px;line-height:12.11px;color:#333">0건</div>
<div class="a" style="left:1437.3px;top:824px;width:1px;height:80px;background:#ececec"></div>
<div class="a" style="left:1438.3px;top:861.6px;width:1px;height:1.6px;background:#fff"></div>
<div class="a" style="left:1438.3px;width:90px;text-align:center;top:837.4px;font-size:12.6px;line-height:12.6px;color:#444">6/30</div>
<div class="a" style="left:1438.3px;width:90px;text-align:center;top:877.15px;font-size:12.11px;line-height:12.11px;color:#333">2건</div>
<div class="a" style="left:72px;top:861.6px;width:1px;height:1.6px;background:#fff"></div>
<div class="a" style="left:1476.5px;top:824px;width:98.5px;height:38px;background:#fafafa;border-left:1px solid #f0f0f0"></div>
<div class="a" style="left:1476.5px;top:863.2px;width:98.5px;height:41px;background:#fff;border-left:1px solid #f0f0f0"></div>
<div class="a" style="left:1501.5px;top:836.75px;font-size:10.87px;line-height:10.87px;font-weight:400;color:#444;-webkit-text-stroke:0.12px #444;">전체 기간</div>
<div class="a" style="left:1476.5px;width:98.5px;text-align:center;top:877.15px;font-size:12.11px;line-height:12.11px;color:#333">354건</div>
<div class="a" style="left:35px;top:904.9px;width:801px;height:5px;border-radius:2.5px;background:#d0d0d0"></div>
<div class="a" style="left:0;top:913.6px;width:1609px;height:11px;background:#fafafa"></div>
<svg class="a" style="left:1545px;top:860px" width="64" height="64" viewBox="0 0 64 64"><defs><filter id="sh" x="-30%" y="-30%" width="160%" height="160%"><feGaussianBlur stdDeviation="1.5"/></filter><clipPath id="cc"><circle cx="37" cy="42" r="23"/></clipPath><linearGradient id="og" x1="0" y1="1" x2="1" y2="0"><stop offset="0" stop-color="#ffd9c0"/><stop offset="0.35" stop-color="#fb8a45"/><stop offset="1" stop-color="#f97f3b"/></linearGradient></defs><circle cx="35.3" cy="39.5" r="25.5" fill="#000" opacity="0.12" filter="url(#sh)"/><circle cx="35.3" cy="39" r="24.9" fill="#fff"/><g clip-path="url(#cc)"><path d="M14 50.5 L62 28.5 L64 64 L10 64z" fill="url(#og)" transform="translate(0 0)"/></g><circle cx="33.9" cy="27.7" r="6.6" fill="#f47f3a"/><text x="33.9" y="31.4" font-size="10" font-weight="bold" fill="#fff" text-anchor="middle" font-family="Liberation Sans">?</text><circle cx="54" cy="19.7" r="4.2" fill="#e0485a"/><circle cx="39.8" cy="48.6" r="0.8" fill="#111"/><circle cx="45" cy="48.6" r="0.8" fill="#111"/><ellipse cx="42.6" cy="52.4" rx="1" ry="1.5" fill="none" stroke="#111" stroke-width="0.9"/></svg>
</body></html>
